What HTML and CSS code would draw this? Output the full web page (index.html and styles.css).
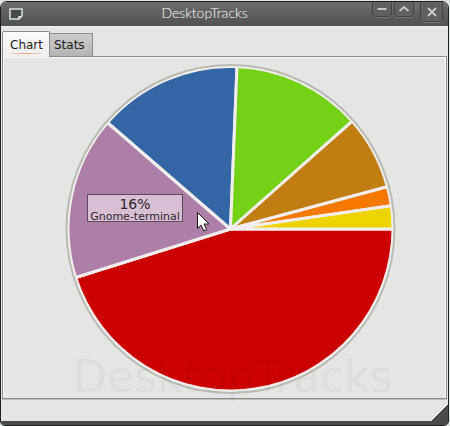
FILE: index.html
```html
<!DOCTYPE html>
<html lang="en">
<head>
  <meta charset="UTF-8">
  <meta name="viewport" content="width=device-width, initial-scale=1.0">
  <title>DesktopTracks</title>
  <link rel="stylesheet" href="styles.css">
</head>
<body>

<div class="window">
  <header class="titlebar">
    <svg class="app-icon" width="14" height="12" viewBox="0 0 14 12" aria-hidden="true">
      <path d="M1 1h12v7l-3 3H1z" fill="#454a48" stroke="#d8dad6" stroke-width="1.6"/>
      <path d="M9 12V8h4z" fill="#d8dad6"/>
    </svg>
    <h1 class="title">DesktopTracks</h1>
    <div class="window-buttons">
      <button type="button" class="win-btn" aria-label="Minimize">
        <svg width="10" height="10" viewBox="0 0 10 10"><path d="M.5 5h9" /></svg>
      </button>
      <button type="button" class="win-btn" aria-label="Maximize">
        <svg width="10" height="10" viewBox="0 0 10 10"><path d="M.5 7L5 3l4.5 4" /></svg>
      </button>
      <button type="button" class="win-btn close" aria-label="Close">
        <svg width="10" height="10" viewBox="0 0 10 10"><path d="M1 1l8 8M9 1l-8 8" /></svg>
      </button>
    </div>
  </header>

  <div class="tabs" role="tablist">
    <button type="button" class="tab active" role="tab" id="tab-chart" aria-selected="true" aria-controls="chart">Chart</button>
    <button type="button" class="tab" role="tab" id="tab-stats" aria-selected="false">Stats</button>
  </div>

  <main class="panel" role="tabpanel" id="chart" aria-labelledby="tab-chart">
    <svg class="chart" viewBox="3 57 443 341">
      <!-- slices, clockwise from 3 o'clock -->
      <g class="slices">
        <path fill="#cc0000" d="M230.5 229H393A162.5 162.5 0 0 1 75.6 277.5z"/>
        <path fill="#ad7fa8" d="M230.5 229L75.6 277.5A162.5 162.5 0 0 1 107.5 122.5z"/>
        <path fill="#3465a4" d="M230.5 229L107.5 122.5A162.5 162.5 0 0 1 237 66.6z"/>
        <path fill="#73d216" d="M230.5 229L237 66.6A162.5 162.5 0 0 1 352.3 121.2z"/>
        <path fill="#c17d11" d="M230.5 229L352.3 121.2A162.5 162.5 0 0 1 387.4 186.8z"/>
        <path fill="#f57900" d="M230.5 229L387.4 186.8A162.5 162.5 0 0 1 391.4 205.8z"/>
        <path fill="#edd400" d="M230.5 229L391.4 205.8A162.5 162.5 0 0 1 393 229z"/>
      </g>
      <circle class="ring" cx="230.5" cy="229" r="164"/>
      <text class="watermark" x="73" y="392">DesktopTracks</text>

      <g class="tip">
        <rect x="87.5" y="194.5" width="95" height="27"/>
        <text class="tip-value" x="135" y="209">16%</text>
        <text class="tip-name" x="135" y="220">Gnome-terminal</text>
      </g>

      <path class="pointer" d="M197.5 212.5v16l3.6-3.4 2.7 5.8 2.8-1.3-2.6-5.6h5z"/>
    </svg>
  </main>

  <footer class="statusbar">
    <svg class="grip" width="16" height="16" viewBox="0 0 16 16" aria-hidden="true">
      <path d="M16 0v16H0z" fill="#4a4a4a"/>
      <path d="M16 0L0 16" stroke="#2c2c2c"/>
    </svg>
  </footer>
</div>

</body>
</html>
```
FILE: styles.css
```css
* {
    box-sizing: border-box;
}

body {
    margin: 0;
    padding: 1px 1px 1px 0;
    min-height: 100vh;
    display: flex;
    background: #dfe3df;
    font-family: "DejaVu Sans", sans-serif;
    color: #1c1c1c;
}

.window {
    flex: 1;
    display: flex;
    flex-direction: column;
    border: 1px solid #202020;
    border-radius: 7px 7px 5px 5px;
    background: #e5e5e5;
    overflow: hidden;
}

/* Title bar */
.titlebar {
    display: grid;
    grid-template-columns: 80px 1fr 80px;
    height: 24px;
    background: linear-gradient(#6c6c6c, #515151);
}

.app-icon {
    margin: 6px 0 0 8px;
}

.title {
    margin: 0;
    padding-right: 40px;
    font: 300 14px/22px Lato, sans-serif;
    text-align: center;
    color: #fff;
}

.window-buttons {
    display: flex;
    justify-content: flex-end;
    align-items: flex-start;
    gap: 2px;
    padding-right: 5px;
}

.win-btn {
    display: flex;
    justify-content: center;
    align-items: center;
    width: 20px;
    height: 15px;
    padding: 0;
    border: 1px solid #424242;
    border-top: 0;
    border-radius: 0 0 4px 4px;
    background: #606060;
    box-shadow: 0 1px 0 #777;
}

.win-btn.close {
    width: 23px;
    height: 20px;
    margin-left: 4px;
}

.win-btn path {
    fill: none;
    stroke: #c8c8c8;
    stroke-width: 1.8;
}

/* Tabs */
.tabs {
    display: flex;
    align-items: flex-end;
    height: 30px;
    padding-left: 1px;
    border-top: 1px solid #f2f2f2;
}

.tab {
    height: 23px;
    padding: 0 7px 0 4px;
    border: 1px solid #8c8c8c;
    border-left: 0;
    border-bottom: 0;
    background: linear-gradient(#cdcdcd, #b4b4b4);
    font: 12px/20px "DejaVu Sans", sans-serif;
    color: #1c1c1c;
}

.tab.active {
    position: relative;
    z-index: 1;
    height: 26px;
    margin-bottom: -1px;
    padding: 0 6px 0 7px;
    border-left: 1px solid #8c8c8c;
    border-radius: 2px 2px 0 0;
    background: linear-gradient(#fafafa, #eeeeee);
}

.tab.active::after {
    content: "";
    position: absolute;
    left: 4px;
    right: 4px;
    bottom: 3px;
    height: 1px;
    background: linear-gradient(90deg, transparent, #f3a58c 40%, #f3a58c 60%, transparent);
}

/* Chart page */
.panel {
    flex: 1;
    display: flex;
    margin: 0 1px;
    border: 1px solid #8c8c8c;
    box-shadow: inset 1px 1px 0 #fafafa, inset -1px 0 0 #fafafa, 0 1px 0 #bcbcbc;
}

.chart {
    flex: 1;
    width: 100%;
    overflow: visible;
}

.ring {
    fill: none;
    stroke: #b9bcb2;
    stroke-width: 2;
}

.slices path {
    stroke: #f3eeee;
    stroke-width: 3;
    stroke-linejoin: round;
}

.watermark {
    font-size: 44px;
    fill: #000;
    fill-opacity: 0.05;
}

.tip rect {
    fill: #d8bfd6;
    stroke: #5f4a5d;
}

.tip text {
    fill: #2c252b;
    text-anchor: middle;
}

.tip-value {
    font-size: 14px;
}

.tip-name {
    font-size: 11px;
}

.pointer {
    fill: #fff;
    stroke: #1a1a1a;
}

/* Status bar */
.statusbar {
    display: flex;
    justify-content: flex-end;
    align-items: flex-end;
    height: 26px;
    border-bottom: 4px solid #4a4a4a;
}

.grip {
    display: block;
}
```
